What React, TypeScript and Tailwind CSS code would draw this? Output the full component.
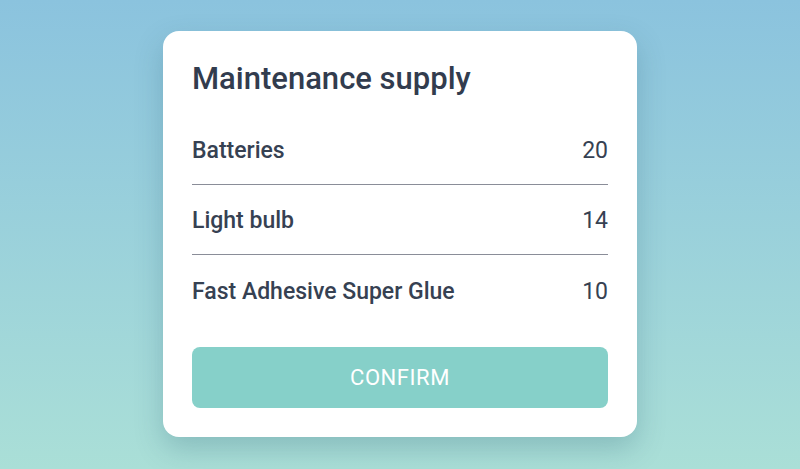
const ITEMS = [
  { name: "Batteries", qty: 20 },
  { name: "Light bulb", qty: 14 },
  { name: "Fast Adhesive Super Glue", qty: 10 },
];

export default function App() {
  return (
    <div
      className="flex h-[469px] w-full items-start justify-center bg-gradient-to-b from-[#8bc3de] to-[#aadfd7] pt-[31px]"
      style={{ fontFamily: "Roboto, 'Noto Sans', sans-serif" }}
    >
      <div className="flex w-[474px] flex-col rounded-2xl bg-white px-[29px] pt-[28px] pb-[29px] shadow-[0_12px_28px_rgba(40,90,110,0.25)]">
        <h1 className="text-[31px] leading-[40px] font-medium text-[#323c4e]">
          Maintenance supply
        </h1>
        <ul className="mt-[16px]">
          {ITEMS.map((item, i) => (
            <li
              key={item.name}
              className={`flex h-[70px] items-center justify-between pt-[4px] text-[23px] text-[#364152] ${
                i < ITEMS.length - 1 ? "border-b border-[#8a8d98]" : ""
              }`}
            >
              <span className="font-medium">{item.name}</span>
              <span>{item.qty}</span>
            </li>
          ))}
        </ul>
        <button className="mt-[22px] h-[61px] w-full rounded-lg bg-[#86d0c9] text-[22px] tracking-wide text-white">
          CONFIRM
        </button>
      </div>
    </div>
  );
}
